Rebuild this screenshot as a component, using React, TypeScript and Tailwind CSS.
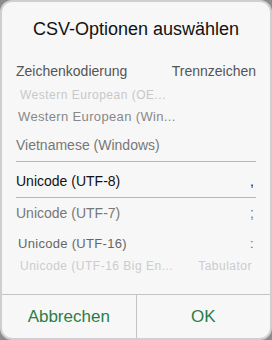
import React from "react";

const FONT = { fontFamily: '"Liberation Sans", Arial, sans-serif' };

export default function App() {
  return (
    <div className="w-[272px] h-[340px] bg-[#8c8c8c]" style={FONT}>
      <div className="w-full h-full rounded-[12px] bg-[#f7f7f7] border-2 border-[#cfcfcf] flex flex-col overflow-hidden">
        <div className="h-[54px] flex items-center justify-center text-[18px] text-[#111]">
          CSV-Optionen auswählen
        </div>
        <div className="h-[31px] flex items-center justify-between px-[14px] text-[14px] text-[#555]">
          <span>Zeichenkodierung</span>
          <span>Trennzeichen</span>
        </div>

        <div className="mx-[14px] flex flex-col">
          <div className="h-[16px] flex items-center pl-[4px] text-[12px] tracking-[0.5px] text-[#c8c8c8]">
            Western European (OE...
          </div>
          <div className="h-[27px] flex items-center pl-[2px] text-[13px] tracking-[0.35px] text-[#888]">
            Western European (Win...
          </div>
          <div className="h-[32px] flex items-center text-[14px] text-[#777] border-b border-[#b8b8b8]">
            Vietnamese (Windows)
          </div>
          <div className="h-[36px] pt-[3px] flex items-center justify-between text-[14px] text-[#111] border-b border-[#b8b8b8]">
            <span>Unicode (UTF-8)</span>
            <span className="pr-[2px]">,</span>
          </div>
          <div className="h-[31px] flex items-center justify-between text-[14px] text-[#777]">
            <span>Unicode (UTF-7)</span>
            <span className="pr-[2px]">;</span>
          </div>
          <div className="h-[29px] flex items-center justify-between pl-[2px] text-[13px] tracking-[0.3px] text-[#666]">
            <span>Unicode (UTF-16)</span>
            <span className="pr-[2px]">:</span>
          </div>
          <div className="h-[16px] flex items-center justify-between pl-[4px] text-[12px] tracking-[0.5px] text-[#cccccc]">
            <span>Unicode (UTF-16 Big En...</span>
            <span className="pr-[4px]">Tabulator</span>
          </div>
        </div>

        <div className="flex-1" />

        <div className="h-[44px] flex border-t border-[#c4c4c4] text-[17px] text-[#2a7d48]">
          <button className="flex-1 flex items-center justify-center border-r border-[#c4c4c4]">
            Abbrechen
          </button>
          <button className="flex-1 flex items-center justify-center">OK</button>
        </div>
      </div>
    </div>
  );
}
